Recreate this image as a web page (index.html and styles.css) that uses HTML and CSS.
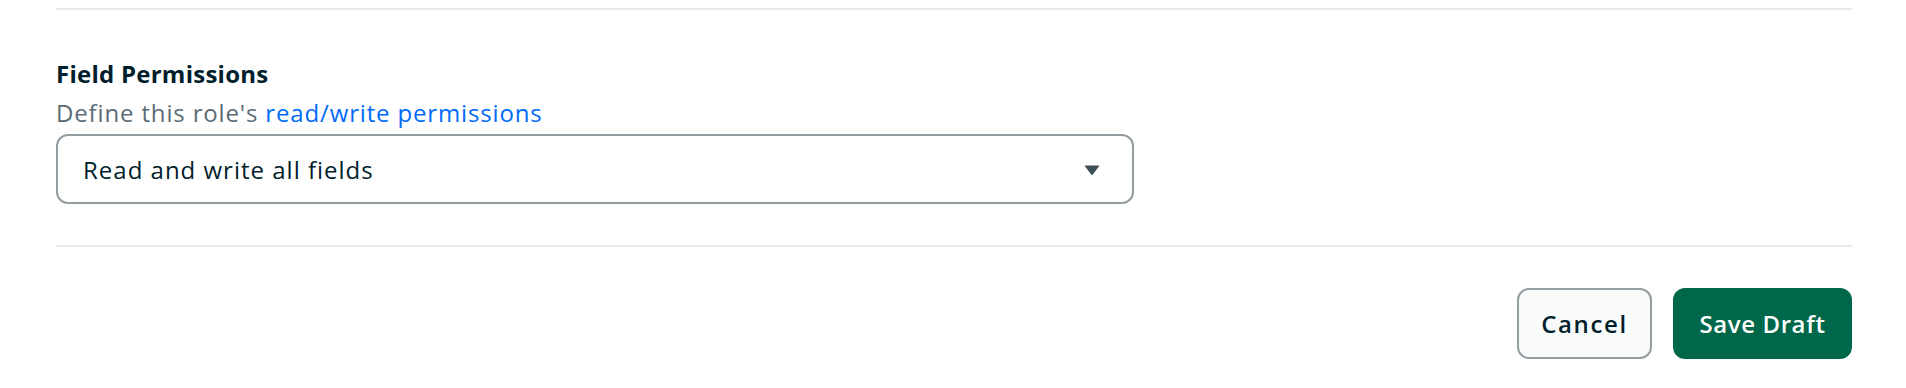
FILE: index.html
```html
<!DOCTYPE html>
<html lang="en">
<head>
<meta charset="utf-8">
<title>Field Permissions</title>
<link rel="stylesheet" href="styles.css">
</head>
<body>
<div class="page">
  <hr class="divider divider-top">
  <section class="field-section">
    <h2 class="field-title">Field Permissions</h2>
    <p class="field-desc">Define this role's <a class="field-link" href="#">read/write permissions</a></p>
    <div class="select">
      <span class="select-value">Read and write all fields</span>
      <svg class="select-caret" width="16" height="11" viewBox="0 0 16 11" aria-hidden="true">
        <path d="M1.6 0.5 H14.4 Q15.6 0.5 14.9 1.5 L8.8 9.6 Q8 10.6 7.2 9.6 L1.1 1.5 Q0.4 0.5 1.6 0.5 Z" fill="#3d4f58"/>
      </svg>
    </div>
  </section>
  <hr class="divider divider-bottom">
  <div class="actions">
    <button class="btn btn-cancel" type="button">Cancel</button>
    <button class="btn btn-primary" type="button">Save Draft</button>
  </div>
</div>
</body>
</html>
```

FILE: styles.css
```css
html, body {
  margin: 0;
  padding: 0;
  background: #ffffff;
}

body {
  font-family: "Open Sans", "Liberation Sans", sans-serif;
  color: #001e2b;
}

.page {
  padding: 8px 54px 0 56px;
  display: flex;
  flex-direction: column;
}

.divider {
  margin: 0;
  border: none;
  height: 2px;
  background: #e8eaea;
}

.field-section {
  padding-top: 44px;
  display: flex;
  flex-direction: column;
}

.field-title {
  margin: 0;
  font-size: 24px;
  line-height: 39px;
  font-weight: 700;
  letter-spacing: 0.25px;
  color: #001e2b;
}

.field-desc {
  margin: 0;
  font-size: 24px;
  line-height: 39px;
  color: #5c6c75;
  letter-spacing: 0.85px;
}

.field-link {
  color: #016bf8;
  text-decoration: none;
}

.select {
  margin-top: 2px;
  width: 1078px;
  height: 70px;
  box-sizing: border-box;
  border: 2px solid #949da1;
  border-radius: 12px;
  display: flex;
  align-items: center;
  justify-content: space-between;
  padding: 0 32px 0 25px;
  background: #ffffff;
}

.select-value {
  font-size: 24px;
  letter-spacing: 1px;
  color: #001e2b;
}

.select-caret {
  display: block;
  margin-top: 2px;
}

.divider-bottom {
  margin-top: 41px;
}

.actions {
  display: flex;
  justify-content: flex-end;
  gap: 21px;
  padding-top: 41px;
}

.btn {
  height: 71px;
  box-sizing: border-box;
  border-radius: 12px;
  font-family: "Open Sans", "Liberation Sans", sans-serif;
  font-size: 24px;
  font-weight: 600;
  letter-spacing: 1px;
  padding: 0 16px;
  cursor: pointer;
}

.btn-cancel {
  width: 135px;
  background: #f9fbfa;
  border: 2px solid #949da1;
  color: #001e2b;
  letter-spacing: 1.6px;
}

.btn-primary {
  width: 179px;
  background: #00684a;
  border: 2px solid #00684a;
  color: #ffffff;
  letter-spacing: 0.6px;
}
```
